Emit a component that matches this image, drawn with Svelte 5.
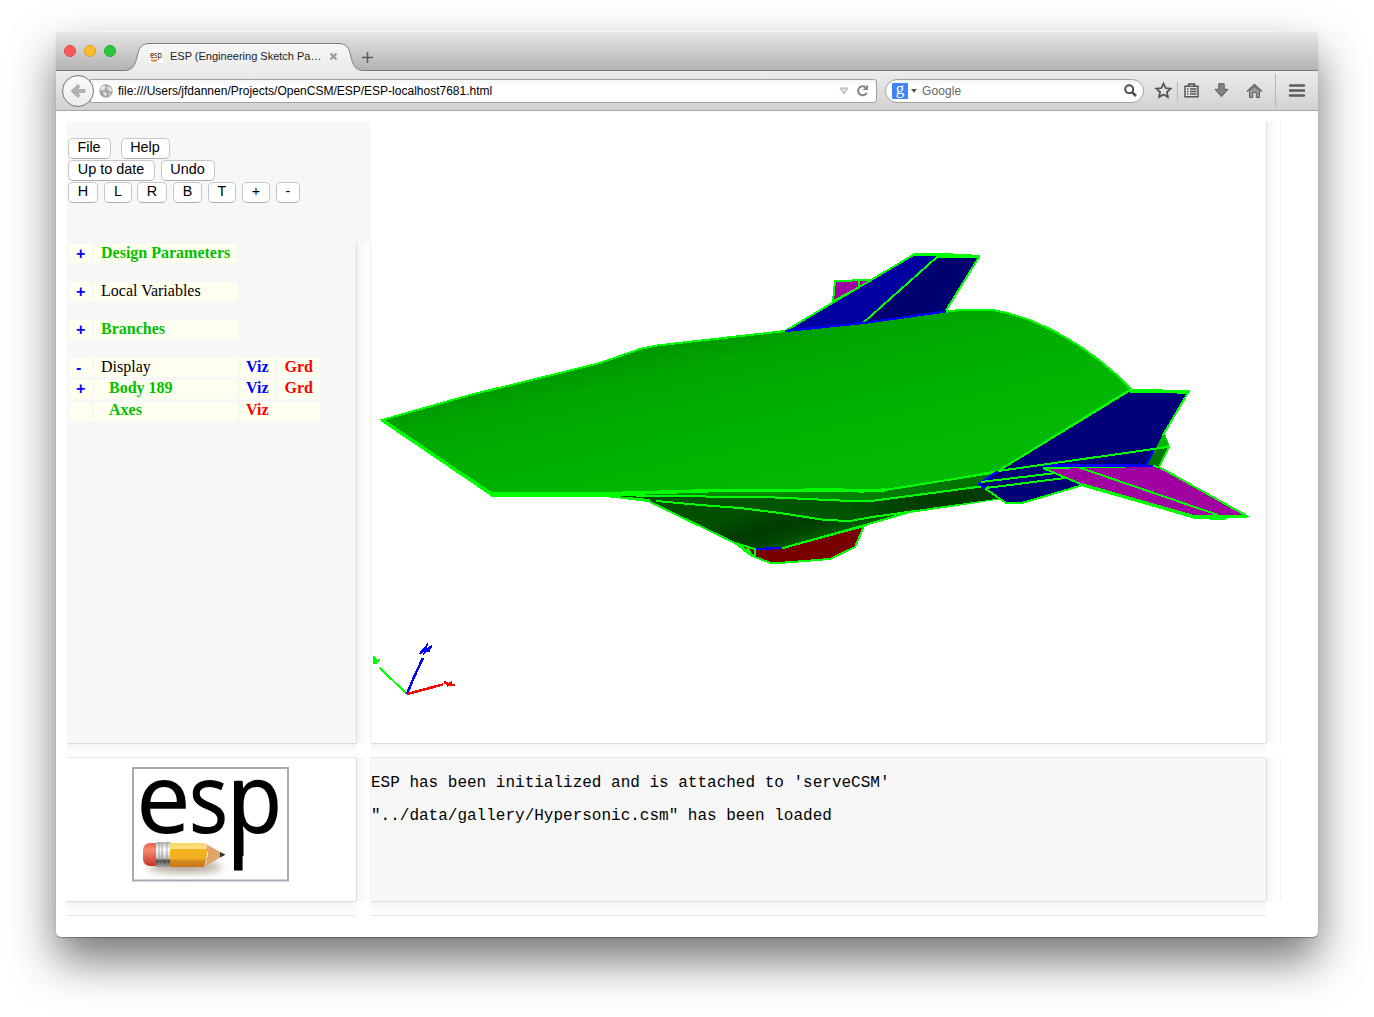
<script>
  const rows = [
    { sign: '+', label: 'Design Parameters', tone: 'green', section: true },
    { sign: '+', label: 'Local Variables', section: true },
    { sign: '+', label: 'Branches', tone: 'green', section: true },
    { sign: '-', label: 'Display', viz: 'blue', grd: true },
    { sign: '+', label: 'Body 189', tone: 'green', nested: true, viz: 'blue', grd: true },
    { sign: '', label: 'Axes', tone: 'green', nested: true, viz: 'red', wide: true }
  ];
  const views = ['H', 'L', 'R', 'B', 'T', '+', '-'];
</script>

<div class="window">
  <header class="titlebar">
    <div class="lights"><i class="close"></i><i class="min"></i><i class="max"></i></div>
    <div class="tab">
      <svg class="tabshape" width="240" height="29" viewBox="0 0 240 29">
        <defs><linearGradient id="tabfill" x1="0" y1="0" x2="0" y2="1"><stop offset="0" stop-color="#f7f7f7" /><stop offset="1" stop-color="#ebebeb" /></linearGradient></defs>
        <path d="M0 28.5C8 28 10 23 12 15C14 5 17 1.500 25 1.500H213C221 1.500 224 5 226 15C228 23 230 28 238 28.500V29H0Z" fill="url(#tabfill)" />
        <path d="M0 28.5C8 28 10 23 12 15C14 5 17 1.500 25 1.500H213C221 1.500 224 5 226 15C228 23 230 28 238 28.500" fill="none" stroke="#7d7d7d" />
      </svg>
      <div class="tabcontent">
        <svg class="favicon" width="14" height="14" viewBox="0 0 14 14"><rect width="14" height="14" fill="#fff" /><text x="1" y="8.500" font-size="9" textLength="12" lengthAdjust="spacingAndGlyphs">esp</text><path d="M2 11q3 1.500 6 0" fill="none" stroke="#e58a3c" stroke-width="2" /></svg>
        <span class="tabtitle">ESP (Engineering Sketch Pa…</span>
        <svg width="9" height="9" viewBox="0 0 9 9"><path d="M1.500 1.500l6 6M7.500 1.500l-6 6" stroke="#9a9a9a" stroke-width="2.200" /></svg>
      </div>
    </div>
    <svg class="newtab" width="11" height="11" viewBox="0 0 11 11"><path d="M5.500 0v11M0 5.500h11" stroke="#5a5a5a" stroke-width="1.600" /></svg>
  </header>

  <nav class="toolbar">
    <div class="back"><svg width="16" height="16" viewBox="0 0 16 16"><path d="M1 8L8 1.500L10 3.500L7.300 6.500H15V9.500H7.300L10 12.500L8 14.500Z" fill="#b2b2b2" stroke="#999" stroke-width=".6" /></svg></div>
    <div class="url">
      <svg width="14" height="14" viewBox="0 0 14 14"><circle cx="7" cy="7" r="6.700" fill="#a5a5a5" /><path d="M2 3L5 1.500L7 3L5.500 5L6 7L3 6L1.500 7ZM9 2L12 4L13 7L11 8L10 6L8 5ZM4 8L8 9L7 12L5 11ZM10 9L12 10L10 12Z" fill="#e8e8e8" /></svg>
      <span class="address">file:///Users/jfdannen/Projects/OpenCSM/ESP/ESP-localhost7681.html</span>
      <svg width="10" height="8" viewBox="0 0 10 8"><path d="M1 1H9L5 7Z" fill="#ddd" stroke="#b0b0b0" /></svg>
      <svg class="reload" width="13" height="13" viewBox="0 0 13 13"><path d="M9.500 3.300A4.500 4.500 0 1 0 10.700 8.700" fill="none" stroke="#858585" stroke-width="2" /><path d="M12 .5V6H6.700Z" fill="#858585" /></svg>
    </div>
    <div class="search">
      <span class="google">g</span>
      <svg width="6" height="4" viewBox="0 0 6 4"><path d="M0 0H6L3 3.800Z" fill="#555" /></svg>
      <span class="hint">Google</span>
      <svg width="13" height="13" viewBox="0 0 13 13"><circle cx="5.200" cy="5.200" r="4" fill="none" stroke="#4d4d4d" stroke-width="2" /><path d="M8 8L12 12" stroke="#4d4d4d" stroke-width="2.500" /></svg>
    </div>
    <svg class="star" width="17" height="17" viewBox="0 0 17 17"><path d="M8.500 1.500L10.600 6L15.600 6.600L11.900 10L12.900 15L8.500 12.500L4.100 15L5.100 10L1.400 6.600L6.400 6Z" fill="#e4e4e4" stroke="#505050" stroke-width="1.700" /></svg>
    <i class="thin"></i>
    <svg class="list" width="15" height="15" viewBox="0 0 15 15"><path d="M1 3.200H14V13.700H1Z" fill="#e2e2e2" stroke="#555" stroke-width="1.500" /><path d="M4.500 3V1H10.500V3" fill="#aaa" stroke="#555" stroke-width="1.500" /><path d="M3 6H4.500M6 6H12.500M3 8.500H4.500M6 8.500H12.500M3 11H4.500M6 11H12.500" stroke="#555" stroke-width="1.300" /></svg>
    <svg class="down" width="15" height="15" viewBox="0 0 15 15"><path d="M4.800 .7H10.200V6.300H14L7.500 13.800L1 6.300H4.800Z" fill="#828282" stroke="#5c5c5c" /></svg>
    <svg class="home" width="17" height="16" viewBox="0 0 17 16"><path d="M3.500 8L8.500 3.500L13.500 8V14.500H10.300V9.500H6.700V14.500H3.500Z" fill="#9a9a9a" stroke="#5c5c5c" /><path d="M1 8.500L8.500 1.800L16 8.500" fill="none" stroke="#5c5c5c" stroke-width="1.500" /></svg>
    <i class="thick"></i>
    <svg class="menu" width="16" height="13" viewBox="0 0 16 13"><path d="M1 1.500H15M1 6.500H15M1 11.500H15" stroke="#5c5c5c" stroke-width="2.400" stroke-linecap="round" /></svg>
  </nav>

  <main class="page">
    <section class="controls">
      <div class="line"><button class="b1">File</button><button class="b2">Help</button></div>
      <div class="line"><button class="b3">Up to date</button><button class="b4">Undo</button></div>
      <div class="line">{#each views as v, i}<button class="v v{i}">{v}</button>{/each}</div>
    </section>

    <section class="tree">
      {#each rows as r}
        <div class="row" class:section={r.section} class:child={r.nested}>
          <span class="cell sign">{r.sign}</span>
          <span class="cell label {r.tone ?? ''}" class:nested={r.nested}>{r.label}</span>
          {#if r.viz}<span class="cell viz {r.viz}" class:wide={r.wide}>Viz</span>{/if}
          {#if r.grd}<span class="cell grd red">Grd</span>{/if}
        </div>
      {/each}
    </section>
    <i class="vbar left"></i>

    <section class="canvas">
      <svg width="895" height="621" viewBox="371 122 895 621">
        <defs>
          <linearGradient id="hull" x1="720" y1="335" x2="755" y2="490" gradientUnits="userSpaceOnUse"><stop offset="0" stop-color="#009800" /><stop offset=".15" stop-color="#00a400" /><stop offset=".45" stop-color="#00ae00" /><stop offset="1" stop-color="#00b900" /></linearGradient>
          <linearGradient id="belly" x1="790" y1="500" x2="803" y2="543" gradientUnits="userSpaceOnUse"><stop offset="0" stop-color="#005000" /><stop offset=".45" stop-color="#003c00" /><stop offset=".75" stop-color="#004400" /><stop offset="1" stop-color="#006000" /></linearGradient>
          <linearGradient id="band" x1="650" y1="0" x2="1000" y2="0" gradientUnits="userSpaceOnUse"><stop offset="0" stop-color="#008c00" /><stop offset=".5" stop-color="#008600" /><stop offset="1" stop-color="#007000" /></linearGradient>
          <linearGradient id="aft" x1="850" y1="500" x2="930" y2="510" gradientUnits="userSpaceOnUse"><stop offset="0" stop-color="#005600" /><stop offset=".5" stop-color="#004600" /><stop offset="1" stop-color="#003c00" /></linearGradient>
        </defs>
        <g class="edges">
          <path d="M833 301L835 281L870 280L866 284Z" fill="#a000a0" /><path class="edge" d="M859 280V288" />
          <path d="M648 501L735 543L752 556L783 548L865 525L910 512L950 506L1003 498L985 484L870 490L600 495Z" fill="url(#belly)" />
          <path class="plain" d="M656 498L745 508L825 520L850 521L915 510L1003 498L985 484L870 498Z" fill="url(#aft)" />
          <path class="plain" d="M600 492L840 490L870 491L998 471L1000 484L875 500L840 500L775 497L656 496Z" fill="url(#band)" />
          <path d="M382 420L470 395L560 373L600 363L640 349L657 345.500L785 331L863 323L945 312L958 310L993 310C1040 318 1092 348 1131 389L998 471L960 478L885 490L861 491L840 490L725 490L677 491L604 493L491 493Z" fill="url(#hull)" />
          <path class="edge heavy" d="M382 420L491 494L604 494L677 492" />
          <path class="edge heavy" d="M677 491.500L725 490.500L840 490L861 491L885 490" />
          <path class="edge" d="M885 490L960 478L998 472" />
          <path class="edge" d="M491 496H604L650 500M600 495L775 497.500L840 500.500L875 500.500L985 486M656 501L700 505L740 508L780 513L825 520L850 521L872 517L915 511" />
          <path d="M735 543L755 549L783 548L864 526L855 547L830 559L772 563.500L755 557Z" fill="#780000" />
          <path class="edge" d="M755 548V557M740 545L748 552M747 547L752 556" />
          <path d="M756 549L782 548" class="blue" />
          <path d="M785 331L915 254L941 254L979 256L945 312L863 323Z" fill="#0000a0" />
          <path d="M863 323L937 257L979 257L945 312Z" fill="#000070" />
          <path d="M914 254.500H940L979 256.500" class="edge heavy" />
          <path class="blue" d="M785 331L863 323L946 311.500" />
          <path d="M986 489L1006 503L1022 503L1083 485L1045 467L998 473Z" fill="#000078" />
          <path d="M1164 434L1169 447L1159 467L1144 467Z" fill="#007800" /><path class="plain" d="M1161 438L1164 434L1169 445L1155 449Z" fill="#00b400" />
          <path class="plain" d="M980 484L998 471L1129 392L1187 393L1161 438L1147 466L1043 468L985 487Z" fill="#000078" />
          <path class="edge" d="M998 471L1129 391H1189L1163 435" />
          <path class="edge heavy" d="M1130 391H1160L1189 392.500" />
          <path class="blue" d="M1155 448L1146 465H1043M998 471L979 484L985 488" />
          <path class="edge" d="M998 471L1168 447M981 482L1064 472M986 488L1065 478M1048 469L1066 478" />
          <path d="M1043 468L1153 466L1159 467L1247 516L1220 518L1195 518L1083 485Z" fill="#a000a0" />
          <path class="edge heavy" d="M1083 485L1195 517L1247 516.500" />
          <path class="edge" d="M1078 467L1218 515M1210 519H1225M1043 468L1083 485" /><path d="M1045 466H1153" class="blue" />
        </g>
        <g class="axis">
          <path d="M407 694L380 668M374 656V664M374 657L377 661L380 660M377 661L375 664" stroke="#0f0" />
          <path d="M407 694L414 677L423 658M420 654L426 647L425 652L432 646M421 651H430" stroke="#00f" stroke-width="2.500" />
          <path d="M407 694L443 684.500M444 682L450 685H455M447 686L452 682" stroke="#f00" stroke-width="2.500" />
        </g>
      </svg>
    </section>
    <i class="vbar right"></i>
    <i class="hbar h1"></i><i class="hbar h2"></i>

    <section class="brand">
      <svg width="158" height="116" viewBox="0 0 158 116">
        <defs>
          <linearGradient id="wood" x1="0" y1="0" x2="0" y2="1"><stop offset="0" stop-color="#f9d560" /><stop offset=".25" stop-color="#fbe08a" /><stop offset=".27" stop-color="#f5b51f" /><stop offset=".68" stop-color="#f0ae20" /><stop offset=".7" stop-color="#d98b1c" /><stop offset="1" stop-color="#c8761b" /></linearGradient>
          <linearGradient id="rubber" x1="0" y1="0" x2="0" y2="1"><stop offset="0" stop-color="#e8604a" /><stop offset=".3" stop-color="#f58a72" /><stop offset="1" stop-color="#c43426" /></linearGradient>
          <linearGradient id="metal" x1="0" y1="0" x2="0" y2="1"><stop offset="0" stop-color="#b5b5b5" /><stop offset=".3" stop-color="#fff" /><stop offset=".65" stop-color="#c2c2c2" /><stop offset=".75" stop-color="#444" /><stop offset="1" stop-color="#aaa" /></linearGradient>
          <filter id="soft" x="-20%" y="-100%" width="140%" height="300%"><feGaussianBlur stdDeviation="4" /></filter>
        </defs>
        <rect x="2" y="2" width="155" height="112.500" fill="#fff" stroke="#a5abb0" stroke-width="2" />
        <g class="logo">
          <text transform="translate(5 67)">e</text>
          <text transform="translate(57.500 67) scale(.86 1)">s</text>
          <text transform="translate(97.200 67) scale(.91 1)">p</text>
        </g>
        <rect x="103" y="15" width="8.600" height="89.500" fill="#000" />
        <ellipse cx="54" cy="101" rx="37" ry="5" fill="#5a3c1c" opacity=".55" filter="url(#soft)" />
        <rect x="12" y="77" width="20" height="23" rx="7" fill="url(#rubber)" />
        <rect x="25" y="76" width="15" height="25" fill="url(#metal)" /><path d="M28 76V101M31 76V101M36 76V101" stroke="#888" stroke-width=".7" />
        <path d="M39 77H73L77 82L75 94L73 101H39Z" fill="url(#wood)" />
        <path d="M73 77L94 88.500L73 101Q78 97 75 93Q79 88 75 83Q78 80 73 77Z" fill="#e0a56a" /><path d="M89 86L94.500 88.700L89 91.500Z" fill="#333" />
      </svg>
    </section>
    <i class="vbar left low"></i>
    <section class="console"><p>ESP has been initialized and is attached to 'serveCSM'</p><p>"../data/gallery/Hypersonic.csm" has been loaded</p></section>
    <i class="vbar right low"></i>
    <i class="hbar h3"></i><i class="hbar h4"></i>
  </main>
</div>

<style>
  :global(body) { background: #fff; }
  .window { box-sizing: border-box; width: 1262px; height: 906px; margin: 31px 0 0 56px; border-radius: 5px; background: #fff; box-shadow: 0 1px 1px rgba(0,0,0,.3), 0 23px 46px rgba(0,0,0,.55); font-family: "Liberation Sans", Arial, sans-serif; }
  :global(#app) { display: flow-root; height: 1017px; overflow: hidden; }
  svg { display: block; flex: none; overflow: visible; }
  .titlebar { height: 40px; box-sizing: border-box; border-bottom: 1px solid #777; border-radius: 5px 5px 0 0; background: linear-gradient(#f4f4f4 0 1px, #e6e6e6 1px, #b3b3b3); display: flex; align-items: flex-start; }
  .lights { display: flex; gap: 8px; padding: 14px 0 0 8px; width: 61px; }
  .lights i { box-sizing: border-box; width: 12px; height: 12px; border-radius: 50%; }
  .close { background: #fc5b57; border: 1px solid #e2463f; }
  .min { background: #fdbc2e; border: 1px solid #dfa023; }
  .max { background: #27c83f; border: 1px solid #1dac2b; }
  .tab { display: grid; margin-top: 11px; }
  .tabshape, .tabcontent { grid-area: 1 / 1; }
  .tabcontent { display: flex; align-items: center; padding-left: 24px; height: 28px; }
  .favicon { margin-right: 7px; font-family: "Open Sans", sans-serif; }
  .tabtitle { width: 159px; font-size: 11px; color: #222; white-space: nowrap; }
  .newtab { margin: 21px 0 0 -3px; }
  .toolbar { height: 40px; box-sizing: border-box; border-bottom: 1px solid #a8a8a8; background: linear-gradient(#ececec, #d2d2d2); display: flex; align-items: center; }
  .back { box-sizing: border-box; width: 32px; height: 32px; border: 1px solid #777; border-radius: 50%; background: linear-gradient(#fafafa, #ececec); margin-left: 6px; display: grid; place-items: center; z-index: 1; }
  .url { box-sizing: border-box; width: 787px; height: 24px; margin-left: -4px; border: 1px solid #a2a2a2; border-radius: 0 3px 3px 0; background: linear-gradient(#f6f6f6, #fff 6px); display: flex; align-items: center; padding-left: 8px; }
  .address { width: 726px; padding-left: 5px; box-sizing: border-box; font-size: 12px; color: #000; white-space: nowrap; }
  .reload { margin-left: 7px; }
  .search { box-sizing: border-box; width: 259px; height: 24px; margin-left: 8px; border: 1px solid #a2a2a2; border-radius: 12px; background: linear-gradient(#f4f4f4, #fff 6px); display: flex; align-items: center; padding-left: 6px; }
  .google { width: 16px; height: 16px; border-radius: 1px; background: #4384f3; color: #fff; font: 17px/12px "Liberation Serif", serif; text-align: center; margin-right: 3px; }
  .hint { width: 207px; padding-left: 5px; box-sizing: border-box; font-size: 12px; color: #666; letter-spacing: .1px; }
  .star { margin-left: 11px; }
  .thin { width: 1px; height: 18px; background: #b5b5b5; margin: 0 6px 0 5px; }
  .down { margin-left: 15px; }
  .home { margin-left: 17px; }
  .thick { width: 1px; height: 34px; background: #b5b8bb; margin: 0 13px 0 12px; }
  .page { display: grid; grid-template-columns: 289px 15px 895px 15px; grid-template-rows: 120px 501px 15px 143px 15px; padding: 11px 0 0 11px; }
  .controls { grid-area: 1 / 1 / 2 / 3; background: #f7f7f7; padding: 15px 0 0 1px; box-sizing: border-box; }
  .line { display: flex; height: 22px; align-items: center; }
  .line button { box-sizing: border-box; height: 21px; padding: 0 1px 3px 0; border: 1px solid #c6c6c6; border-bottom-color: #aeaeae; border-radius: 5px; background: #fff; color: #000; font: 14.400px/16px "Liberation Sans", Arial, sans-serif; white-space: nowrap; }
  .line .b1 { width: 43px; margin-right: 10px; }
  .line .b2 { width: 49px; }
  .line .b3 { width: 87px; margin-right: 6px; }
  .line .b4 { width: 54px; }
  .line .v { width: 28px; margin-right: 7px; padding-right: 0; }
  .line .v0, .line .v2 { width: 30px; margin-right: 6px; }
  .line .v2 { margin-right: 6px; margin-left: -2px; }
  .line .v3 { width: 29px; margin-right: 6px; }
  .line .v5 { margin-right: 6px; margin-left: -1px; }
  .line .v6 { width: 24px; }
  .tree { grid-area: 2 / 1; background: #f7f7f7; padding: 2px 0 0 2px; font: 16px/18px "Liberation Serif", "Times New Roman", serif; }
  .row { display: grid; grid-template-columns: 23px 143px 35px 42px; column-gap: 2px; height: 19px; margin-bottom: 3px; }
  .row.section { margin-bottom: 19px; }
  .row.child { line-height: 16px; }
  .cell { background: #fffff0; }
  .sign { color: #00f; font-weight: bold; font-family: "Liberation Sans", Arial, sans-serif; padding-left: 7px; line-height: 19px; }
  .child .sign { line-height: 17px; }
  .label { padding-left: 7px; white-space: nowrap; }
  .nested { padding-left: 15px; }
  .green { color: #00c000; font-weight: bold; }
  .blue { color: #00f; font-weight: bold; }
  .red { color: #f00; font-weight: bold; }
  .viz { margin-left: 1px; margin-right: -1px; padding-left: 6px; }
  .grd { margin-left: 2px; margin-right: -2px; padding-left: 6.500px; }
  .wide { grid-column: 3 / 5; margin-right: -2px; }
  .vbar { grid-area: 2 / 2; background: linear-gradient(90deg, #dedede 0 1px, #f4f4f4 1px, #fdfdfd 10px, #fff 14px, #f0f0f0 14px); }
  .vbar.right { grid-area: 1 / 4 / 3 / 5; }
  .vbar.low { grid-row: 4 / 5; }
  .hbar { grid-area: 3 / 1; background: linear-gradient(#dcdcdc 0 1px, #f4f4f4 1px, #fdfdfd 10px, #fff 14px, #e8e8e8 14px); }
  .h2 { grid-area: 3 / 3; }
  .h3 { grid-area: 5 / 1; }
  .h4 { grid-area: 5 / 3; }
  .canvas { grid-area: 1 / 3 / 3 / 4; }
  .brand { grid-area: 4 / 1; padding: 8px 0 0 64px; }
  .logo { font: 97px "Noto Sans", sans-serif; }
  .console { grid-area: 4 / 3; background: #f7f7f7; font: 16px/18px "Liberation Mono", "Courier New", monospace; padding-top: 16px; white-space: nowrap; box-sizing: border-box; }
  .console p { margin: 0 0 15px; }
  .edges { shape-rendering: crispEdges; stroke: #0f0; stroke-width: 2; }
  .edge { fill: none; }
  .heavy { stroke-width: 3.300; }
  .plain { stroke: none; }
  .edges .blue { fill: none; stroke: #00f; stroke-width: 2.300; }
  .axis { fill: none; stroke-width: 2; shape-rendering: crispEdges; }
</style>
